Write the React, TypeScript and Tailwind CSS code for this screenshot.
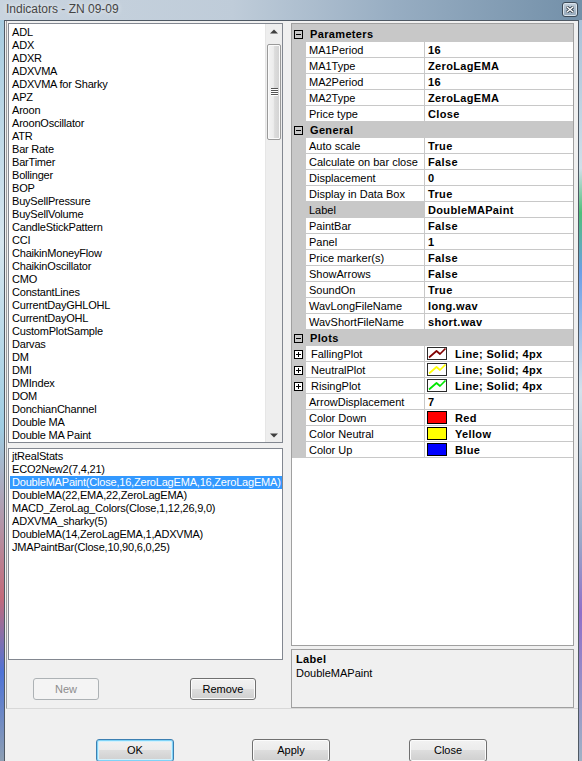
import React from "react";

const LIST1 = [
  "ADL", "ADX", "ADXR", "ADXVMA", "ADXVMA for Sharky", "APZ", "Aroon", "AroonOscillator",
  "ATR", "Bar Rate", "BarTimer", "Bollinger", "BOP", "BuySellPressure", "BuySellVolume",
  "CandleStickPattern", "CCI", "ChaikinMoneyFlow", "ChaikinOscillator", "CMO", "ConstantLines",
  "CurrentDayGHLOHL", "CurrentDayOHL", "CustomPlotSample", "Darvas", "DM", "DMI", "DMIndex",
  "DOM", "DonchianChannel", "Double MA", "Double MA Paint",
];

const LIST2 = [
  "jtRealStats",
  "ECO2New2(7,4,21)",
  "DoubleMAPaint(Close,16,ZeroLagEMA,16,ZeroLagEMA)",
  "DoubleMA(22,EMA,22,ZeroLagEMA)",
  "MACD_ZeroLag_Colors(Close,1,12,26,9,0)",
  "ADXVMA_sharky(5)",
  "DoubleMA(14,ZeroLagEMA,1,ADXVMA)",
  "JMAPaintBar(Close,10,90,6,0,25)",
];

type Swatch = { type: "line" | "fill"; color: string };
type Row =
  | { kind: "cat"; label: string }
  | { kind: "prop"; name: string; value: string; selected?: boolean; plus?: boolean; swatch?: Swatch };

const ROWS: Row[] = [
  { kind: "cat", label: "Parameters" },
  { kind: "prop", name: "MA1Period", value: "16" },
  { kind: "prop", name: "MA1Type", value: "ZeroLagEMA" },
  { kind: "prop", name: "MA2Period", value: "16" },
  { kind: "prop", name: "MA2Type", value: "ZeroLagEMA" },
  { kind: "prop", name: "Price type", value: "Close" },
  { kind: "cat", label: "General" },
  { kind: "prop", name: "Auto scale", value: "True" },
  { kind: "prop", name: "Calculate on bar close", value: "False" },
  { kind: "prop", name: "Displacement", value: "0" },
  { kind: "prop", name: "Display in Data Box", value: "True" },
  { kind: "prop", name: "Label", value: "DoubleMAPaint", selected: true },
  { kind: "prop", name: "PaintBar", value: "False" },
  { kind: "prop", name: "Panel", value: "1" },
  { kind: "prop", name: "Price marker(s)", value: "False" },
  { kind: "prop", name: "ShowArrows", value: "False" },
  { kind: "prop", name: "SoundOn", value: "True" },
  { kind: "prop", name: "WavLongFileName", value: "long.wav" },
  { kind: "prop", name: "WavShortFileName", value: "short.wav" },
  { kind: "cat", label: "Plots" },
  { kind: "prop", name: "FallingPlot", value: "Line; Solid; 4px", plus: true, swatch: { type: "line", color: "#800000" } },
  { kind: "prop", name: "NeutralPlot", value: "Line; Solid; 4px", plus: true, swatch: { type: "line", color: "#ffff00" } },
  { kind: "prop", name: "RisingPlot", value: "Line; Solid; 4px", plus: true, swatch: { type: "line", color: "#00e600" } },
  { kind: "prop", name: "ArrowDisplacement", value: "7" },
  { kind: "prop", name: "Color Down", value: "Red", swatch: { type: "fill", color: "#ff0000" } },
  { kind: "prop", name: "Color Neutral", value: "Yellow", swatch: { type: "fill", color: "#ffff00" } },
  { kind: "prop", name: "Color Up", value: "Blue", swatch: { type: "fill", color: "#0000ff" } },
];

function ExpandBox({ plus, filled }: { plus?: boolean; filled?: boolean }) {
  return (
    <svg width="9" height="9" viewBox="0 0 9 9" className="block shrink-0">
      <rect x="0.5" y="0.5" width="8" height="8" fill={filled ? "#ffffff" : "none"} stroke="#000" />
      <line x1="2" y1="4.5" x2="7" y2="4.5" stroke="#000" />
      {plus && <line x1="4.5" y1="2" x2="4.5" y2="7" stroke="#000" />}
    </svg>
  );
}

function SwatchIcon({ s }: { s: Swatch }) {
  return (
    <svg width="20" height="13" viewBox="0 0 20 13" className="block shrink-0">
      {s.type === "fill" ? (
        <rect x="0.5" y="0.5" width="19" height="12" fill={s.color} stroke="#000" />
      ) : (
        <>
          <rect x="0.5" y="0.5" width="19" height="12" fill="#fff" stroke="#2a2a2a" />
          <polyline
            points="2,10.5 9.5,4 13,7 18.5,1.5"
            fill="none"
            stroke={s.color}
            strokeWidth="1.7"
            strokeLinejoin="round"
          />
        </>
      )}
    </svg>
  );
}

function PropertyGrid() {
  return (
    <div className="w-[283px] h-[623px] border border-[#a0a0a0] bg-white flex flex-col overflow-hidden">
      <div className="h-[2px] bg-[#c8c8c8] shrink-0" />
      {ROWS.map((r, i) =>
        r.kind === "cat" ? (
          <div key={i} className="h-[16px] shrink-0 bg-[#c8c8c8] flex items-center">
            <div className="ml-[2px]">
              <ExpandBox />
            </div>
            <span className="ml-[7px] text-[11px] font-bold tracking-[0.35px] text-black">{r.label}</span>
          </div>
        ) : (
          <div key={i} className="h-[16px] shrink-0 flex">
            <div className="w-[14px] shrink-0 bg-[#c8c8c8] flex items-center">
              {r.plus && (
                <div className="ml-[2px]">
                  <ExpandBox plus filled />
                </div>
              )}
            </div>
            <div
              className={
                "w-[118px] shrink-0 border-b border-[#c8c8c8] pt-[2px] flex items-center overflow-hidden whitespace-nowrap text-[11px] text-black " +
                (r.selected ? "bg-[#c8c8c8] " : "bg-white ") +
                (r.plus ? "pl-[5px]" : "pl-[3px]")
              }
            >
              {r.name}
            </div>
            <div
              className={
                "flex-1 border-l border-b border-[#c8c8c8] flex items-center whitespace-nowrap text-[11px] font-bold tracking-[0.35px] text-black " +
                (r.swatch ? "pl-[2px]" : "pl-[3px] pt-[2px]")
              }
            >
              {r.swatch && <SwatchIcon s={r.swatch} />}
              <span className={r.swatch ? "ml-[8px] pt-[2px]" : ""}>{r.value}</span>
            </div>
          </div>
        )
      )}
    </div>
  );
}

function Arrow({ up }: { up?: boolean }) {
  return (
    <svg width="8" height="5" viewBox="0 0 8 5" className="block">
      {up ? <polygon points="0,4.5 4,0.5 8,4.5" fill="#3f3f3f" /> : <polygon points="0,0.5 8,0.5 4,4.5" fill="#3f3f3f" />}
    </svg>
  );
}

function ScrollBar() {
  return (
    <div className="w-[17px] shrink-0 flex flex-col bg-[#eeeeee] border-l border-[#e6e6e6]">
      <div className="h-[17px] flex items-center justify-center pb-[3px]">
        <Arrow up />
      </div>
      <div className="flex-1 pt-[3px]">
        <div className="mx-[1px] h-[96px] rounded-[2px] border border-[#9a9a9a] bg-[linear-gradient(to_right,#f4f4f4_0%,#ececec_45%,#dcdcdc_55%,#d2d2d2_100%)] shadow-[inset_0_0_0_1px_#fbfbfb] flex items-center justify-center">
          <svg width="7" height="8" viewBox="0 0 7 8" className="block">
            <rect x="0" y="0" width="7" height="1" fill="#555" />
            <rect x="0" y="2" width="7" height="1" fill="#555" />
            <rect x="0" y="4" width="7" height="1" fill="#555" />
            <rect x="0" y="6" width="7" height="1" fill="#555" />
            <rect x="0" y="1" width="7" height="1" fill="#fff" />
            <rect x="0" y="3" width="7" height="1" fill="#fff" />
            <rect x="0" y="5" width="7" height="1" fill="#fff" />
            <rect x="0" y="7" width="7" height="1" fill="#fff" />
          </svg>
        </div>
      </div>
      <div className="h-[17px] flex items-center justify-center pt-[4px]">
        <Arrow />
      </div>
    </div>
  );
}

function WinButton({
  label,
  w,
  h,
  variant = "normal",
  className = "",
}: {
  label: string;
  w: string;
  h: string;
  variant?: "normal" | "default" | "disabled";
  className?: string;
}) {
  const base = "shrink-0 rounded-[3px] flex items-center justify-center text-[11px] leading-none ";
  const v =
    variant === "disabled"
      ? "border border-[#adb2b5] bg-[#f4f4f4] text-[#8d8d8d]"
      : variant === "default"
      ? "border border-[#3c7fb1] bg-[linear-gradient(to_bottom,#f2f2f2_0%,#ebebeb_49%,#dddddd_50%,#cfcfcf_100%)] shadow-[inset_0_0_0_1px_#7fd3f7,inset_0_0_0_2px_#d4f1fc] text-black"
      : "border border-[#707070] bg-[linear-gradient(to_bottom,#f2f2f2_0%,#ebebeb_49%,#dddddd_50%,#cfcfcf_100%)] shadow-[inset_0_0_0_1px_#fcfcfc] text-black";
  return <div className={base + v + " " + w + " " + h + " " + className}>{label}</div>;
}

export default function App() {
  return (
    <div className="w-[582px] h-[761px] overflow-hidden flex flex-col font-['Liberation_Sans',Arial,sans-serif] bg-[#8ea4ba]">
      {/* Title bar */}
      <div className="h-[20px] shrink-0 flex items-start bg-[linear-gradient(to_right,#c9d4df_0%,#bfccd9_40%,#97adc2_68%,#7390a9_100%)]">
        <span className="pl-[6px] pt-[2px] text-[12px] leading-[15px] text-[#454545] [text-shadow:0_0_5px_rgba(255,255,255,0.95)]">
          Indicators - ZN 09-09
        </span>
        <div className="ml-auto mt-[2px] mr-[4px] w-[16px] h-[15px] rounded-[3px] border border-[#3d4a57] bg-[linear-gradient(to_bottom,#c2cfdb,#95a9bc)] shadow-[inset_0_0_0_1px_#dbe4ec] flex items-center justify-center">
          <svg width="8" height="7" viewBox="0 0 8 7" className="block">
            <path d="M1 1 L7 6 M7 1 L1 6" stroke="#2b3845" strokeWidth="3" strokeLinecap="square" />
            <path d="M1 1 L7 6 M7 1 L1 6" stroke="#ffffff" strokeWidth="1.4" strokeLinecap="square" />
          </svg>
        </div>
      </div>

      <div className="flex-1 flex min-h-0">
        {/* left frame (glass) */}
        <div className="w-[4px] shrink-0 bg-[linear-gradient(to_bottom,#a7cce0_0%,#d6e6ef_30%,#9fcde3_55%,#c26a7a_78%,#4f73d6_88%,#8d9fb3_100%)]" />

        {/* client */}
        <div className="w-[575px] shrink-0 border-l border-r border-t border-[#4f5964] bg-[#f0f0f0] flex flex-col">
          {/* top section */}
          <div className="h-[688px] shrink-0 ml-[1px] border-l border-b border-l-[#a0a0a0] border-b-[#d8d8d8] pt-[2px] pl-[1px] flex">
            {/* left column */}
            <div className="w-[275px] shrink-0 flex flex-col">
              <div className="h-[420px] border border-[#828790] bg-white flex overflow-hidden">
                <div className="flex-1 pt-[2px] overflow-hidden">
                  {LIST1.map((t) => (
                    <div
                      key={t}
                      className="h-[13px] leading-[13px] ml-[1px] pl-[2px] text-[11px] tracking-[-0.2px] text-black whitespace-nowrap"
                    >
                      {t}
                    </div>
                  ))}
                </div>
                <ScrollBar />
              </div>
              <div className="mt-[5px] h-[212px] border border-[#828790] bg-white pt-[1px] overflow-hidden">
                {LIST2.map((t, i) => (
                  <div
                    key={t + i}
                    className={
                      "h-[13px] leading-[13px] ml-[1px] pl-[2px] text-[11px] tracking-[-0.2px] whitespace-nowrap " +
                      (i === 2 ? "bg-[#3399ff] text-white" : "text-black")
                    }
                  >
                    {t}
                  </div>
                ))}
              </div>
              <div className="mt-[18px] h-[22px] flex">
                <WinButton label="New" w="w-[66px]" h="h-[22px]" variant="disabled" className="ml-[25px]" />
                <WinButton label="Remove" w="w-[66px]" h="h-[22px]" className="ml-[91px]" />
              </div>
            </div>

            {/* right column */}
            <div className="ml-[8px] w-[283px] shrink-0 flex flex-col">
              <PropertyGrid />
              <div className="mt-[3px] h-[59px] border border-[#a0a0a0] bg-[#f0f0f0] pt-[2px] pl-[4px] text-[11px] leading-[14px] text-black">
                <div className="font-bold tracking-[0.35px]">Label</div>
                <div>DoubleMAPaint</div>
              </div>
            </div>
          </div>

          {/* bottom buttons */}
          <div className="flex-1 pt-[30px] flex items-start">
            <WinButton label="OK" w="w-[78px]" h="h-[23px]" variant="default" className="ml-[91px]" />
            <WinButton label="Apply" w="w-[78px]" h="h-[23px]" className="ml-[78px]" />
            <WinButton label="Close" w="w-[78px]" h="h-[23px]" className="ml-[79px]" />
          </div>
        </div>

        {/* right frame (glass) */}
        <div className="w-[3px] shrink-0 bg-[linear-gradient(to_bottom,#a9c1d8_0%,#cfe0ea_20%,#4fbf7a_26%,#6c9ee6_34%,#d3e2ec_50%,#9aa9c8_70%,#8f6fc8_80%,#9fb2c6_100%)]" />
      </div>
    </div>
  );
}
